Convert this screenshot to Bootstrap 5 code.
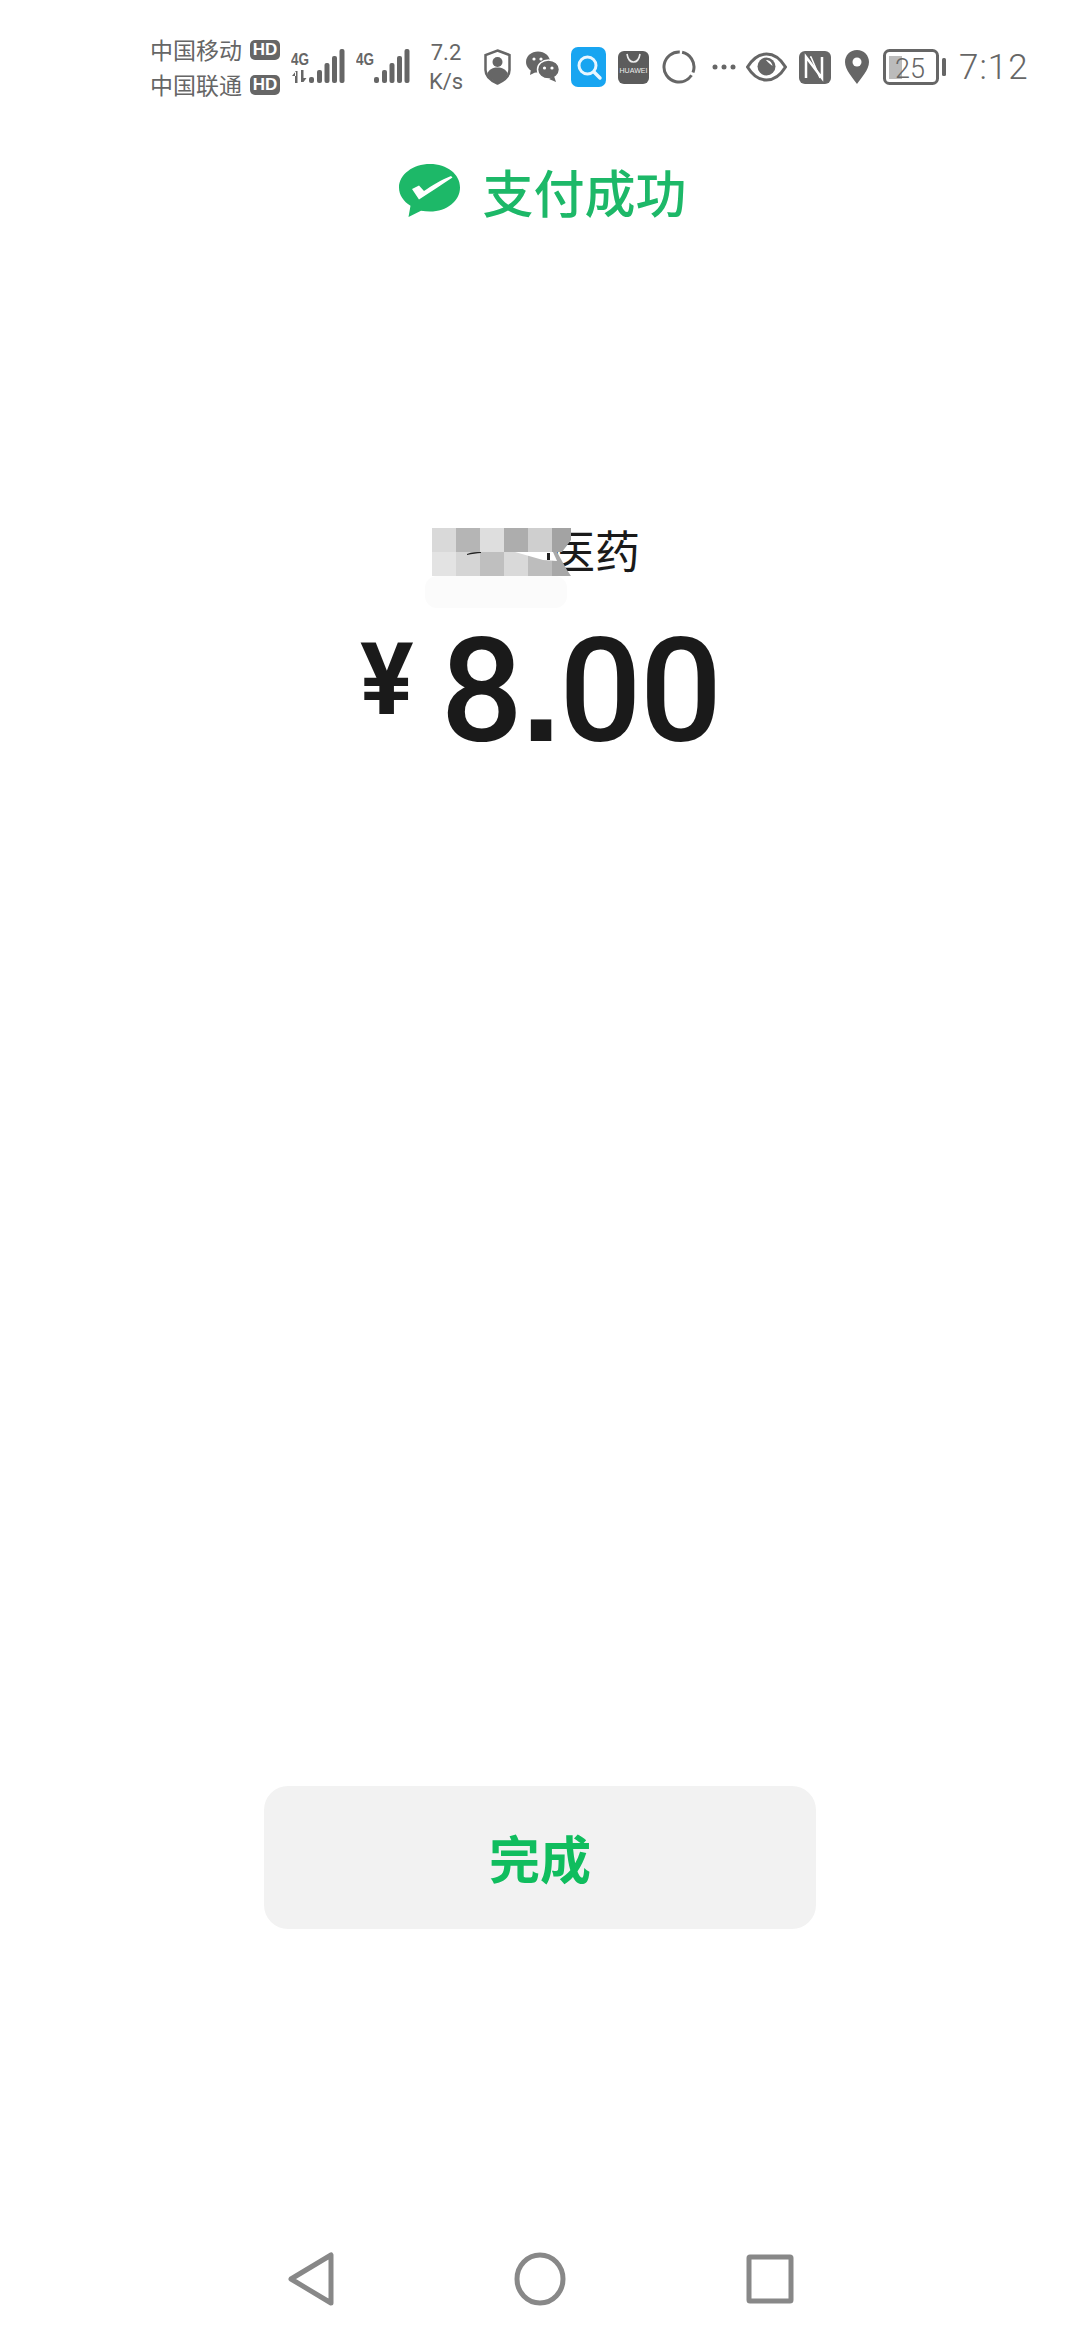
<!DOCTYPE html>
<html lang="zh-CN">
<head>
    <meta charset="UTF-8">
    <meta name="viewport" content="width=device-width, initial-scale=1.0">
    <title>支付成功</title>
    <link href="https://cdn.jsdelivr.net/npm/bootstrap@5.3.0/dist/css/bootstrap.min.css" rel="stylesheet">
    <style>
        :root {
            --pay-green: #1db868;
            --done-green: #10bd5e;
            --status-grey: #666;
        }
        body {
            background: #fff;
            height: 2340px;
            font-family: "Noto Sans CJK SC", "Liberation Sans", sans-serif;
        }
        .page-wrap {
            height: 2340px;
        }
        .status-bar {
            height: 70px;
            margin-top: 32px;
            padding: 0 0 0 150px;
            color: var(--status-grey);
            flex: none;
        }
        .carrier-line {
            font-size: 23px;
            line-height: 35px;
            gap: 8px;
        }
        .hd-tag {
            width: 30px;
            height: 20px;
            border-radius: 5px;
            background: #666;
            color: #fff;
            font: 700 17px/20px "Liberation Sans", sans-serif;
            text-align: center;
        }
        .net-speed {
            font: 400 22px/29px Roboto, sans-serif;
            width: 40px;
            margin-left: 16px;
            margin-right: 18px;
            text-align: center;
        }
        .clock-text {
            font: 300 35px/1 Roboto, sans-serif;
            letter-spacing: 1px;
            margin-left: 13px;
        }
        .signal-icon { margin-left: 11px; }
        .pay-title {
            height: 60px;
            margin-top: 59px;
            padding-left: 6px;
            gap: 21px;
            color: var(--pay-green);
            font-size: 51px;
            font-weight: 500;
            line-height: 60px;
        }
        .merchant-name {
            margin-top: 299px;
            padding-left: 110px;
            font-size: 45px;
            line-height: 60px;
            color: #1a1a1a;
            width: 200px;
        }
        .merchant-mask {
            position: absolute;
            left: -15px;
            top: 8px;
        }
        .amount-row {
            height: 150px;
            margin-top: 36px;
            color: #1a1a1a;
            font-family: Roboto, sans-serif;
        }
        .amount-currency {
            font-size: 100px;
            font-weight: 700;
            line-height: 150px;
            margin-right: 27px;
            margin-top: -22px;
        }
        .amount-value {
            font-size: 145px;
            font-weight: 500;
            line-height: 150px;
            letter-spacing: -2px;
        }
        .amount-dot {
            font-family: "Liberation Sans", sans-serif;
            font-weight: 700;
        }
        .done-btn {
            width: 552px;
            height: 143px;
            margin-bottom: 307px;
            background: #f2f2f2;
            border: 0;
            border-radius: 24px;
            color: var(--done-green);
            font-size: 51px;
            font-weight: 700;
        }
        .nav-keys {
            height: 104px;
            padding-bottom: 18px;
            gap: 170px;
            flex: none;
        }
    </style>
</head>
<body>
    <div class="page-wrap d-flex flex-column">
        <!-- status bar -->
        <div class="status-bar d-flex align-items-center">
            <div class="d-flex flex-column">
                <div class="carrier-line d-flex align-items-center"><span>中国移动</span><span class="hd-tag">HD</span></div>
                <div class="carrier-line d-flex align-items-center"><span>中国联通</span><span class="hd-tag">HD</span></div>
            </div>
            <svg class="signal-icon" width="54" height="36" viewBox="0 0 54 36" fill="#666">
                <text x="0" y="16" font-family="Liberation Sans" font-weight="700" font-size="17" textLength="18" lengthAdjust="spacingAndGlyphs">4G</text>
                <path d="M4 22v12h2.500V22zM1 27l4-5v5zM10 21h2.500v12H10zM12.500 33l3-4h-3z"/>
                <rect x="18" y="28" width="5" height="6" rx="2"/>
                <rect x="26" y="21" width="5" height="13" rx="2"/>
                <rect x="33.500" y="14" width="5" height="20" rx="2"/>
                <rect x="41" y="7" width="5" height="27" rx="2"/>
                <rect x="48.500" y="0" width="5" height="34" rx="2"/>
            </svg>
            <svg class="signal-icon" width="54" height="36" viewBox="0 0 54 36" fill="#666">
                <text x="0" y="16" font-family="Liberation Sans" font-weight="700" font-size="17" textLength="18" lengthAdjust="spacingAndGlyphs">4G</text>
                <rect x="18" y="28" width="5" height="6" rx="2"/>
                <rect x="26" y="21" width="5" height="13" rx="2"/>
                <rect x="33.500" y="14" width="5" height="20" rx="2"/>
                <rect x="41" y="7" width="5" height="27" rx="2"/>
                <rect x="48.500" y="0" width="5" height="34" rx="2"/>
            </svg>
            <div class="net-speed">7.2<br>K/s</div>
            <!-- shield -->
            <svg width="27" height="36" viewBox="0 0 27 36">
                <path d="M13.500 1.500 25.500 6v15c0 7-6 11-12 13.500C7.500 32 1.500 28 1.500 21V6z" fill="none" stroke="#666" stroke-width="2.500"/>
                <circle cx="13.500" cy="13" r="5" fill="#666"/>
                <path d="M3 25c2-5 6-6.500 10.500-6.500S22 20 24 25c-2 4-6 7-10.500 9C9 32 5 29 3 25z" fill="#666"/>
            </svg>
            <!-- chat bubbles -->
            <svg width="34" height="32" viewBox="0 0 34 32" style="margin-left:15px">
                <ellipse cx="12" cy="11" rx="12" ry="10.500" fill="#666"/>
                <path d="M5 18l-1 6 6-3z" fill="#666"/>
                <ellipse cx="22.500" cy="18.500" rx="11" ry="9.500" fill="#666" stroke="#fff" stroke-width="1.500"/>
                <path d="M28 25l2 6-7-3z" fill="#666"/>
                <circle cx="8" cy="8" r="1.600" fill="#fff"/>
                <circle cx="15" cy="8" r="1.600" fill="#fff"/>
                <circle cx="18.500" cy="17" r="1.600" fill="#fff"/>
                <circle cx="26" cy="17" r="1.600" fill="#fff"/>
            </svg>
            <!-- search app -->
            <svg width="35" height="40" viewBox="0 0 35 40" style="margin-left:11px">
                <rect width="35" height="40" rx="7" fill="#18a5f1"/>
                <circle cx="16.500" cy="18.500" r="8.500" fill="none" stroke="#e8f6ff" stroke-width="3"/>
                <path d="M23 25l6 6" stroke="#e8f6ff" stroke-width="3.500" stroke-linecap="round"/>
            </svg>
            <!-- app gallery -->
            <svg width="31" height="33" viewBox="0 0 31 33" style="margin-left:12px">
                <rect width="31" height="33" rx="6" fill="#5c5c5c"/>
                <path d="M9 3c1 6 3.500 8 6.500 8S21 9 22 3" fill="none" stroke="#eee" stroke-width="1.600"/>
                <text x="15.500" y="22" text-anchor="middle" fill="#eee" font-family="Liberation Sans" font-size="7" textLength="28" lengthAdjust="spacingAndGlyphs">HUAWEI</text>
            </svg>
            <!-- loading ring -->
            <svg width="34" height="36" viewBox="0 0 34 36" style="margin-left:13px">
                <circle cx="17" cy="18" r="15" fill="none" stroke="#666" stroke-width="3" stroke-dasharray="26 3 62.200 3" transform="rotate(-78 17 18)"/>
            </svg>
            <!-- overflow dots -->
            <svg width="24" height="6" viewBox="0 0 24 6" fill="#666" style="margin-left:16px">
                <circle cx="3" cy="3" r="2.500"/><circle cx="12" cy="3" r="2.500"/><circle cx="21" cy="3" r="2.500"/>
            </svg>
            <!-- eye comfort -->
            <svg width="41" height="30" viewBox="0 0 41 30" style="margin-left:10px">
                <path d="M1.500 15C7 6 13 2 20.500 2S34 6 39.500 15C34 24 28 28 20.500 28S7 24 1.500 15z" fill="none" stroke="#666" stroke-width="3"/>
                <circle cx="20.500" cy="14.500" r="9" fill="#666"/>
                <path d="M20 8c3 0 6 2 6.500 6-2-2-4-3-6.500-6z" fill="#fff"/>
            </svg>
            <!-- nfc -->
            <svg width="32" height="33" viewBox="0 0 32 33" style="margin-left:12px">
                <rect width="32" height="33" rx="6" fill="#666"/>
                <path d="M7 27V6l16 21V6" fill="none" stroke="#fff" stroke-width="2.500"/>
                <path d="M11 6h1l9 21" fill="none" stroke="#fff" stroke-width="1.500"/>
            </svg>
            <!-- location pin -->
            <svg width="24" height="34" viewBox="0 0 24 34" style="margin-left:14px">
                <path d="M12 0C5 0 0 5.500 0 12c0 8 8 16 12 22 4-6 12-14 12-22C24 5.500 19 0 12 0z" fill="#666"/>
                <circle cx="12" cy="12" r="4.500" fill="#fff"/>
            </svg>
            <!-- battery -->
            <svg width="63" height="36" viewBox="0 0 63 36" style="margin-left:14px">
                <rect x="1.500" y="1.500" width="53" height="33" rx="5" fill="none" stroke="#666" stroke-width="3"/>
                <rect x="6" y="7" width="13" height="23" fill="#bbb"/>
                <text x="27" y="29" text-anchor="middle" fill="#666" font-family="Roboto" font-weight="300" font-size="27">25</text>
                <rect x="59" y="9" width="4" height="18" rx="1.500" fill="#666"/>
            </svg>
            <span class="clock-text">7:12</span>
        </div>

        <!-- result header -->
        <div class="pay-title d-flex justify-content-center align-items-center">
            <svg width="62" height="54" viewBox="0 0 62 54">
                <path d="M31 0C14 0 0 10.500 0 23.500 0 31 4.500 37.500 11.500 41.800L9.500 53l12.500-6.200c3 .5 6 .7 9 .7 17 0 30-10.500 30-24S48 0 31 0z" fill="#1db868"/>
                <path d="M13 25l7-3.500 5 5.500C33 21.500 43 15.500 52 12l1.500 1.500C43 20 32 28 20 35.500z" fill="#fff"/>
            </svg>
            <span>支付成功</span>
        </div>

        <div class="merchant-name position-relative align-self-center">
            医药
            <!-- merchant name is pixelated -->
            <svg class="merchant-mask" width="146" height="80" viewBox="0 0 146 80">
                <rect x="0" y="48" width="142" height="32" rx="12" fill="#fbfbfb"/>
                <rect x="7" y="0" width="24" height="24" fill="#d9d9d9"/>
                <rect x="31" y="0" width="24" height="24" fill="#b5b5b5"/>
                <rect x="55" y="0" width="24" height="24" fill="#dedede"/>
                <rect x="79" y="0" width="24" height="24" fill="#adadad"/>
                <rect x="103" y="0" width="24" height="24" fill="#cfcfcf"/>
                <path d="M127 0h19v12l-9 12h-10z" fill="#a3a3a3"/>
                <rect x="7" y="24" width="24" height="24" fill="#e3e3e3"/>
                <rect x="31" y="24" width="24" height="24" fill="#d5d5d5"/>
                <rect x="55" y="24" width="24" height="24" fill="#bfbfbf"/>
                <rect x="79" y="24" width="24" height="24" fill="#d9d9d9"/>
                <rect x="103" y="24" width="24" height="24" fill="#bdbdbd"/>
                <path d="M127 24h5l10 18 4 6h-19z" fill="#a8a8a8"/>
                <path d="M90 24l38 0 4 9-14-1z" fill="#fff"/>
                <path d="M42 26c5-2 10-2 14-2v1c-4 0-9 1-14 2z" fill="#222"/>
                <rect x="122" y="25" width="3" height="7" fill="#222"/>
            </svg>
        </div>

        <div class="amount-row d-flex justify-content-center align-items-center">
            <span class="amount-currency">¥</span>
            <span class="amount-value">8<span class="amount-dot">.</span>00</span>
        </div>

        <button type="button" class="btn done-btn align-self-center mt-auto">完成</button>

        <!-- system navigation keys -->
        <div class="nav-keys d-flex justify-content-center align-items-center">
            <svg width="60" height="54" viewBox="0 0 60 54" fill="none" stroke="#888" stroke-width="5" stroke-linejoin="round">
                <path d="M51 3v48L11 27z"/>
            </svg>
            <svg width="60" height="54" viewBox="0 0 60 54" fill="none" stroke="#888" stroke-width="5">
                <ellipse cx="30" cy="27" rx="23" ry="24"/>
            </svg>
            <svg width="60" height="54" viewBox="0 0 60 54" fill="none" stroke="#888" stroke-width="5" stroke-linejoin="round">
                <rect x="9" y="5" width="42" height="44" rx="1"/>
            </svg>
        </div>
    </div>

    <script src="https://cdn.jsdelivr.net/npm/bootstrap@5.3.0/dist/js/bootstrap.bundle.min.js"></script>
</body>
</html>
